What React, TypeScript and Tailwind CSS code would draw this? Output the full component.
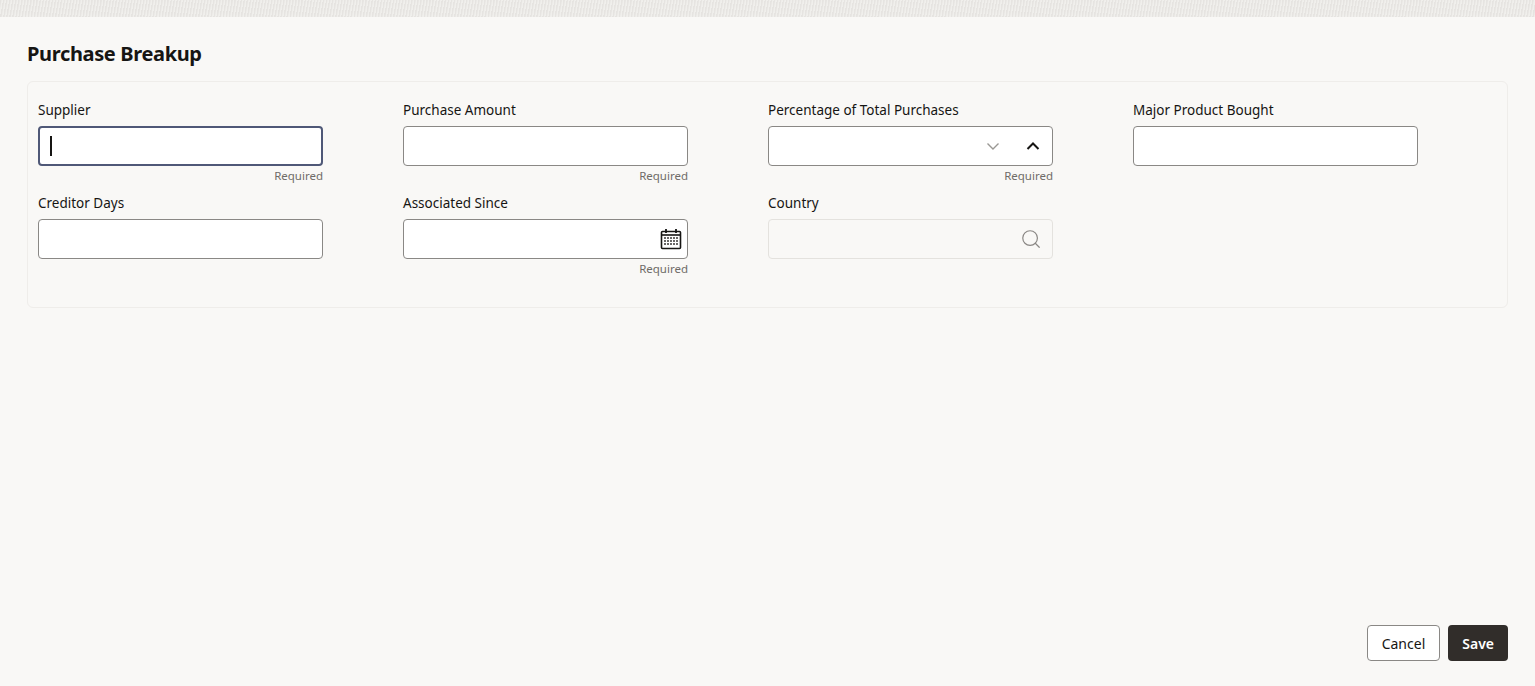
import { Search } from 'lucide-react';

const font = { fontFamily: '"Noto Sans", "Open Sans", sans-serif' };

const Label = ({ children }: { children: string }) => (
  <label className="mb-[6px] block h-[20px] text-[13.5px] leading-[20px] text-[#161513]">{children}</label>
);

const Required = ({ show }: { show?: boolean }) => (
  <div className="h-[27px] pt-[1px] text-right text-[11.5px] leading-[18px] text-[#6f6c68]">
    {show ? 'Required' : ''}
  </div>
);

const CalendarIcon = () => (
  <svg width="24" height="24" viewBox="0 0 24 24" fill="none" stroke="#161513">
    <rect x="2.5" y="4.5" width="19" height="17" rx="1" strokeWidth="1.6" />
    <line x1="2.5" y1="8" x2="21.5" y2="8" strokeWidth="1.6" />
    <line x1="7" y1="2" x2="7" y2="6" strokeWidth="1.8" />
    <line x1="17" y1="2" x2="17" y2="6" strokeWidth="1.8" />
    {[11, 14, 17].map((y) =>
      [6, 9, 12, 15, 18].map((x) => (
        <rect key={`${x}-${y}`} x={x - 0.8} y={y - 0.8} width="1.6" height="1.6" fill="#161513" stroke="none" />
      )),
    )}
  </svg>
);

const Chevron = ({ up, color }: { up?: boolean; color: string }) => (
  <svg width="16" height="16" viewBox="0 0 16 16" fill="none" stroke={color} strokeWidth={up ? 2 : 1.4}>
    {up ? <polyline points="2.5,11 8,5.5 13.5,11" /> : <polyline points="2.5,5.5 8,11 13.5,5.5" />}
  </svg>
);

export default function App() {
  return (
    <div className="min-h-[686px] w-full bg-[#f9f8f6] text-[#161513]" style={font}>
      <div className="h-[17px] w-full bg-[#ebeae7] bg-[repeating-linear-gradient(100deg,#e6e4e1_0px,#e6e4e1_1px,#f0efec_2px,#f0efec_3px)]" />

      <div className="flex min-h-[669px] flex-col px-[27px]">
        <h1 className="pt-[23px] text-[20px] font-bold leading-[28px] tracking-[-0.35px]">Purchase Breakup</h1>

        <div className="mt-[13px] rounded-[6px] border border-[#efedea] bg-[#f9f8f6] px-[10px] pb-[21px] pt-[18px]">
          <div className="grid grid-cols-[285px_285px_285px_285px] gap-x-[80px]">
            <div>
              <Label>Supplier</Label>
              <div className="flex h-[40px] items-center rounded-[4px] border-2 border-[#4f5877] bg-white px-[10px]">
                <span className="h-[20px] w-[2px] bg-[#161513]" />
              </div>
              <Required show />
            </div>
            <div>
              <Label>Purchase Amount</Label>
              <div className="h-[40px] rounded-[4px] border border-[#8a8885] bg-white" />
              <Required show />
            </div>
            <div>
              <Label>Percentage of Total Purchases</Label>
              <div className="flex h-[40px] items-center justify-end gap-[24px] rounded-[4px] border border-[#8a8885] bg-white pr-[11px]">
                <Chevron color="#9a9894" />
                <Chevron up color="#161513" />
              </div>
              <Required show />
            </div>
            <div>
              <Label>Major Product Bought</Label>
              <div className="h-[40px] rounded-[4px] border border-[#8a8885] bg-white" />
              <Required />
            </div>

            <div>
              <Label>Creditor Days</Label>
              <div className="h-[40px] rounded-[4px] border border-[#8a8885] bg-white" />
              <Required />
            </div>
            <div>
              <Label>Associated Since</Label>
              <div className="flex h-[40px] items-center justify-end rounded-[4px] border border-[#8a8885] bg-white pr-[4px]">
                <CalendarIcon />
              </div>
              <Required show />
            </div>
            <div>
              <Label>Country</Label>
              <div className="flex h-[40px] items-center justify-end rounded-[4px] border border-[#e4e2de] bg-[#f9f8f6] pr-[10px]">
                <Search size={22} strokeWidth={1.3} color="#8a8784" />
              </div>
              <Required />
            </div>
          </div>
        </div>

        <div className="mt-auto flex justify-end gap-[8px] pb-[25px]">
          <button className="h-[36px] rounded-[4px] border border-[#8a8885] bg-white px-[14px] text-[14px] text-[#161513]">
            Cancel
          </button>
          <button className="h-[36px] rounded-[4px] bg-[#312d2a] px-[14px] text-[14px] font-semibold text-white">
            Save
          </button>
        </div>
      </div>
    </div>
  );
}
